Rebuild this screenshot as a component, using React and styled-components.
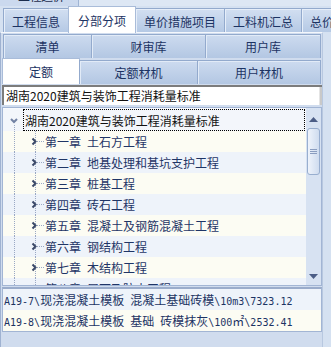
import React from 'react';
import styled, { createGlobalStyle } from 'styled-components';

const GlobalStyle = createGlobalStyle`
  body {
    margin: 0;
    background: #d5e1f1;
    font-family: "Noto Sans CJK SC", "Noto Sans", sans-serif;
    font-size: 12px;
  }
`;

const mainTabs = ['工程信息', '分部分项', '单价措施项目', '工料机汇总', '总价措施'];
const subRow1 = [['清单', '89px'], ['财审库', '114px'], ['用户库', '1fr']];
const subRow2 = [['定额', '78px'], ['定额材机', '118px'], ['用户材机', '1fr']];
const chapters = [
  ['第一章', '土石方工程'],
  ['第二章', '地基处理和基坑支护工程'],
  ['第三章', '桩基工程'],
  ['第四章', '砖石工程'],
  ['第五章', '混凝土及钢筋混凝土工程'],
  ['第六章', '钢结构工程'],
  ['第七章', '木结构工程'],
  ['第八章', '屋面及防水工程'],
];

const App = () => {
  return (
    <Screen>
      <GlobalStyle />
      <TopStrip>
        <PeekTab><span>工程造价</span></PeekTab>
      </TopStrip>
      <MainTabRow>
        {mainTabs.map((t, i) => (
          <MainTab key={t} $active={i === 1}>{t}</MainTab>
        ))}
      </MainTabRow>
      <Panel>
        <SubRow $cols={subRow1.map(s => s[1]).join(' ')} $inset={3}>
          {subRow1.map(([t]) => <SubTab key={t}>{t}</SubTab>)}
        </SubRow>
        <SubRow $cols={subRow2.map(s => s[1]).join(' ')} $inset={2}>
          {subRow2.map(([t], i) => <SubTab key={t} $active={i === 0}>{t}</SubTab>)}
        </SubRow>
        <Combo>
          <span>湖南2020建筑与装饰工程消耗量标准</span>
          <ComboEdge />
        </Combo>
        <TreeBox>
          <TreeList>
            <RootRow>
              <svg width="20" height="22">
                <polyline points="8,10 11,13 14,10" fill="none" stroke="#7282a4" strokeWidth="2" />
                <line x1="11.5" y1="16" x2="11.5" y2="22" stroke="#9aa8c4" strokeDasharray="1 1" />
              </svg>
              <FocusLabel>湖南2020建筑与装饰工程消耗量标准</FocusLabel>
            </RootRow>
            {chapters.map(([n, name], i) => (
              <TreeRow key={n} $even={i % 2 === 1}>
                <svg width="41" height="21">
                  <line x1="11.5" y1="0" x2="11.5" y2="21" stroke="#9aa8c4" strokeDasharray="1 1" />
                  <line x1="32.5" y1="0" x2="32.5" y2="21" stroke="#9aa8c4" strokeDasharray="1 1" />
                  <line x1="34" y1="10.5" x2="41" y2="10.5" stroke="#9aa8c4" strokeDasharray="1 1" />
                  <polyline points="29.5,7.5 32.5,10.5 29.5,13.5" fill="none" stroke="#3a4868" strokeWidth="2" />
                </svg>
                <ChapterLabel>{n}{'\u2002'}{name}</ChapterLabel>
              </TreeRow>
            ))}
          </TreeList>
          <ScrollBar>
            <ArrowBtn>
              <svg width="9" height="5"><polygon points="0,5 4.5,0 9,5" fill="#4b5d86" /></svg>
            </ArrowBtn>
            <Track>
              <Thumb>
                <svg width="7" height="7">
                  <line x1="0" y1="1.5" x2="7" y2="1.5" stroke="#8a9dc0" />
                  <line x1="0" y1="3.5" x2="7" y2="3.5" stroke="#8a9dc0" />
                  <line x1="0" y1="5.5" x2="7" y2="5.5" stroke="#8a9dc0" />
                </svg>
              </Thumb>
            </Track>
            <ArrowBtn>
              <svg width="9" height="5"><polygon points="0,0 9,0 4.5,5" fill="#4b5d86" /></svg>
            </ArrowBtn>
          </ScrollBar>
        </TreeBox>
        <ListBox>
          <ListRow $even>
            <Ascii>A19-7\</Ascii>现浇混凝土模板<Ascii> </Ascii>混凝土基础砖模<Ascii>\10m3\7323.12</Ascii>
          </ListRow>
          <ListRow>
            <Ascii>A19-8\</Ascii>现浇混凝土模板<Ascii> </Ascii>基础<Ascii> </Ascii>砖模抹灰<Ascii>\100</Ascii>㎡<Ascii>\2532.41</Ascii>
          </ListRow>
        </ListBox>
      </Panel>
    </Screen>
  );
};

export default App;

const Screen = styled.div`
  width: 331px;
  height: 347px;
  overflow: hidden;
  background: #d5e1f1;
  color: #1c3363;
`;

const TopStrip = styled.div`
  height: 6px;
  overflow: hidden;
  display: flex;
  background: #dde7f4;
`;

const PeekTab = styled.div`
  width: 78px;
  height: 6px;
  border-right: 1px solid #9fb4d4;
  background: #cbd9ee;
  overflow: hidden;
  span {
    display: block;
    margin-top: -11px;
    padding-left: 18px;
    line-height: 14px;
    color: #1c2c4c;
    letter-spacing: -0.5px;
  }
`;

const MainTabRow = styled.div`
  height: 26px;
  display: flex;
  align-items: flex-end;
  padding-left: 4px;
  white-space: nowrap;
`;

const MainTab = styled.div`
  flex: none;
  height: ${p => (p.$active ? 27 : 24)}px;
  margin-left: -1px;
  margin-bottom: ${p => (p.$active ? -1 : 0)}px;
  padding: 1px ${p => (p.$active ? 9 : 8)}px 0;
  box-sizing: border-box;
  display: flex;
  align-items: center;
  justify-content: center;
  border: 1px solid ${p => (p.$active ? '#a9bcd9' : '#93aacd')};
  border-bottom: none;
  background: ${p => (p.$active ? '#ffffff' : 'linear-gradient(#d2dff1, #b5c9e5)')};
  box-shadow: ${p => (p.$active ? 'none' : 'inset 1px 1px 0 #e6eef9')};
  position: relative;
  z-index: ${p => (p.$active ? 1 : 0)};
`;

const Panel = styled.div`
  width: 323px;
  height: 315px;
  box-sizing: border-box;
  border-top: 1px solid #f4f7fc;
  border-left: 1px solid #9fb2d1;
  border-right: 1px solid #b8c8e0;
  background: #d0dcee;
  padding: 0 0 0 1px;
  display: flex;
  flex-direction: column;
`;

const SubRow = styled.div`
  display: grid;
  grid-template-columns: ${p => p.$cols};
  align-items: end;
  height: ${p => (p.$inset === 3 ? 25 : 26)}px;
  margin-left: ${p => p.$inset - 2}px;
  margin-right: 1px;
`;

const SubTab = styled.div`
  height: ${p => (p.$active ? 26 : 24)}px;
  box-sizing: border-box;
  display: flex;
  align-items: center;
  justify-content: center;
  margin-left: -1px;
  border: 1px solid ${p => (p.$active ? '#a9bcd9' : '#93aacd')};
  border-bottom: none;
  background: ${p => (p.$active ? '#ffffff' : 'linear-gradient(#cddbef, #b3c7e3)')};
  box-shadow: ${p => (p.$active ? 'none' : 'inset 1px 1px 0 #e2ebf7')};
  &:first-child {
    margin-left: 0;
  }
`;

const Combo = styled.div`
  margin-top: 1px;
  height: 20px;
  box-sizing: border-box;
  display: flex;
  align-items: center;
  justify-content: space-between;
  border-top: 2px solid #7c7c7c;
  border-left: 2px solid #7c7c7c;
  background: #ffffff;
  color: #111111;
  padding-left: 2px;
  span {
    line-height: 16px;
  }
`;

const ComboEdge = styled.div`
  width: 2px;
  align-self: stretch;
  background: #c9c9c9;
  border-left: 1px solid #e4e4e4;
`;

const TreeBox = styled.div`
  margin-top: 2px;
  height: 179px;
  box-sizing: border-box;
  border: 1px solid #a2b5d4;
  display: flex;
  background: #f7f9fd;
`;

const TreeList = styled.div`
  flex: 1;
  overflow: hidden;
  padding-top: 1px;
`;

const TreeRow = styled.div`
  height: 21px;
  display: flex;
  align-items: center;
  background: ${p => (p.$even ? '#eef3fa' : '#fcfcf3')};
  svg {
    flex: none;
    display: block;
  }
`;

const RootRow = styled(TreeRow)`
  height: 22px;
  background: #f3f6fb;
`;

const FocusLabel = styled.div`
  flex: 1;
  height: 22px;
  box-sizing: border-box;
  border: 1px dotted #000000;
  margin-right: 1px;
  padding-left: 1px;
  display: flex;
  align-items: center;
  color: #111111;
  white-space: nowrap;
`;

const ChapterLabel = styled.div`
  padding-left: 1px;
  color: #1f3566;
  white-space: nowrap;
`;

const ScrollBar = styled.div`
  width: 15px;
  flex: none;
  display: flex;
  flex-direction: column;
  padding-top: 3px;
  box-sizing: border-box;
  background: #d7e2f2;
`;

const ArrowBtn = styled.div`
  height: 17px;
  display: flex;
  align-items: center;
  justify-content: center;
`;

const Track = styled.div`
  flex: 1;
  padding: 0 1px;
`;

const Thumb = styled.div`
  height: 47px;
  box-sizing: border-box;
  border: 1px solid #98aecf;
  border-radius: 3px;
  background: linear-gradient(90deg, #eef3fb, #cfdcef);
  display: flex;
  align-items: center;
  justify-content: center;
`;

const ListBox = styled.div`
  margin-top: 1px;
  height: 45px;
  box-sizing: border-box;
  border: 1px solid #a2b5d4;
  border-top: 2px solid #9aaccb;
`;

const ListRow = styled.div`
  height: 21px;
  line-height: 19px;
  padding: 1px 0 0 1px;
  box-sizing: border-box;
  white-space: pre;
  overflow: hidden;
  color: #1c3363;
  background: ${p => (p.$even ? '#eef3fa' : '#fcfcf3')};
`;

const Ascii = styled.span`
  font-family: "DejaVu Sans Mono", "Liberation Mono", monospace;
  font-size: 10px;
  line-height: 10px;
`;
